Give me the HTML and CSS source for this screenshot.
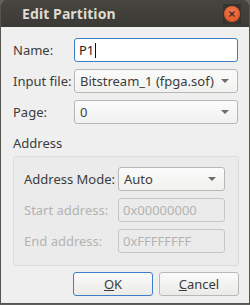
FILE: index.html
```html
<!DOCTYPE html>
<html lang="en">
<head>
  <meta charset="UTF-8">
  <title>Edit Partition</title>
  <link rel="stylesheet" href="styles.css">
</head>
<body>
  <div class="window">
    <div class="titlebar">
      <span class="title">Edit Partition</span>
      <span class="close-box">
        <span class="close">
          <svg width="8" height="8" viewBox="0 0 8 8"><path d="M1.5 1.5 L6.5 6.5 M6.5 1.5 L1.5 6.5" stroke="#3a2a20" stroke-width="1.3"/></svg>
        </span>
      </span>
    </div>
    <div class="content">
      <div class="form">
        <label>Name:</label>
        <div class="field focused">P1<span class="caret"></span></div>
        <label>Input file:</label>
        <div class="field combo">Bitstream_1 (fpga.sof)<span class="arrow"></span></div>
        <label>Page:</label>
        <div class="field combo">0<span class="arrow"></span></div>
      </div>
      <div class="section-title">Address</div>
      <div class="group">
        <label>Address Mode:</label>
        <div class="field combo">Auto<span class="arrow"></span></div>
        <label class="disabled">Start address:</label>
        <div class="field disabled">0x00000000</div>
        <label class="disabled">End address:</label>
        <div class="field disabled">0xFFFFFFFF</div>
      </div>
      <div class="buttons">
        <button class="default"><u>O</u>K</button>
        <button><u>C</u>ancel</button>
      </div>
    </div>
  </div>
</body>
</html>
```

FILE: styles.css
```css
html, body {
  margin: 0;
  padding: 0;
  background: #5f5f5b;
}

body {
  font-family: "Noto Sans", "Open Sans", sans-serif;
  font-size: 13px;
  color: #3c3c3c;
}

.window {
  width: 248px;
  height: 303px;
  border: 1px solid #55544f;
  border-top: none;
  border-radius: 5px 5px 0 0;
  background: #efefef;
  overflow: hidden;
}

.titlebar {
  height: 27px;
  background: linear-gradient(#46453f, #3b3a36);
  display: flex;
  align-items: center;
  padding-left: 21px;
  padding-right: 8px;
}

.title {
  flex: 1;
  color: #dfdbd2;
  font-size: 14px;
  font-weight: bold;
  letter-spacing: 0.1px;
}

.close-box {
  width: 18px;
  height: 20px;
  background: #35342f;
  display: flex;
  align-items: center;
  justify-content: center;
}

.close {
  width: 16px;
  height: 16px;
  border-radius: 50%;
  background: radial-gradient(circle at 50% 35%, #f07a4e, #dc4b1c);
  display: flex;
  align-items: center;
  justify-content: center;
}

.content {
  padding: 11px 10px 0 12px;
}

.form {
  display: grid;
  grid-template-columns: 61px 164px;
  row-gap: 7px;
  align-items: center;
}

label {
  color: #3c3c3c;
}

.field {
  height: 22px;
  border: 1px solid #b8b8b4;
  border-radius: 3px;
  background: #ffffff;
  display: flex;
  align-items: center;
  padding: 0 6px 0 4px;
  color: #3c3c3c;
  position: relative;
}

.field.focused {
  border-color: #3b7fc4;
  color: #222;
}

.caret {
  width: 1px;
  height: 15px;
  background: #111;
  margin-left: 1px;
}

.combo {
  background: linear-gradient(#fbfbfb, #f1f1f0);
  padding-left: 5px;
}

.arrow {
  margin-left: auto;
  width: 0;
  height: 0;
  border-left: 4px solid transparent;
  border-right: 4px solid transparent;
  border-top: 4px solid #6d6d6d;
  margin-right: 2px;
}

.section-title {
  margin-top: 9px;
  height: 20px;
  line-height: 20px;
}

.group {
  margin-top: 3px;
  height: 86px;
  border: 1px solid #dcdcda;
  border-radius: 3px;
  background: #ebebeb;
  padding: 10px 12px 12px 10px;
  display: grid;
  grid-template-columns: 94px 107px;
  row-gap: 7px;
  align-items: center;
}

.disabled {
  color: #b3b3b0;
}

.field.disabled {
  background: #ebebeb;
  border-color: #c6c6c3;
  padding-left: 4px;
}

.buttons {
  margin-top: 6px;
  display: flex;
  justify-content: flex-end;
  gap: 6px;
}

button {
  width: 80px;
  height: 24px;
  font-family: inherit;
  font-size: 13px;
  color: #3c3c3c;
  border: 1px solid #b8b8b4;
  border-radius: 3px;
  background: linear-gradient(#fbfbfb, #eaeae8);
  padding: 0;
}

button.default {
  border-color: #3b7fc4;
}
```
